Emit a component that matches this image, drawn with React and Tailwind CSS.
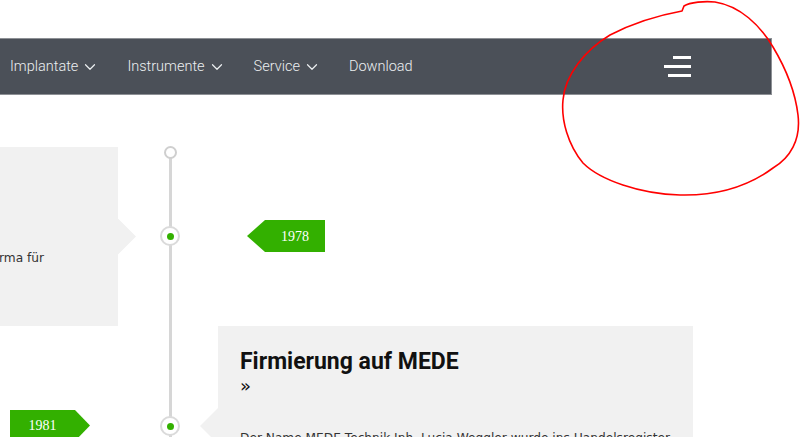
import { ChevronDown } from 'lucide-react';

const navItems = [
	{ label: 'Implantate', menu: true },
	{ label: 'Instrumente', menu: true },
	{ label: 'Service', menu: true },
	{ label: 'Download', menu: false },
];

function Dot({ small }) {
	if (small) {
		return <div className="h-[13px] w-[13px] rounded-full border-2 border-[#cfcfcf] bg-white" />;
	}
	return (
		<div className="flex h-[20px] w-[20px] items-center justify-center rounded-full border-2 border-[#dadada] bg-white">
			<div className="h-[7px] w-[7px] rounded-full bg-[#33b000]" />
		</div>
	);
}

export default function App() {
	return (
		<div className="relative h-[437px] w-[800px] overflow-hidden bg-white font-['DejaVu_Sans',sans-serif] text-[#333]">
			<div className="pt-[38px]">
				{/* ── Nav bar ─────────────────────────────── */}
				<nav className="flex h-[57px] w-[772px] items-center border-y border-r border-[#8d9095] bg-[#4b5058] pl-[10px] pr-[80px] font-['Roboto',sans-serif] text-[14.5px] font-light text-[#eceff1]">
					<ul className="flex items-center gap-[28px]">
						{navItems.map((item) => (
							<li className="flex items-center gap-[3px]" key={item.label}>
								<span>{item.label}</span>
								{item.menu && <ChevronDown size={18} strokeWidth={1.6} />}
							</li>
						))}
					</ul>
					<button className="ml-auto flex w-[27px] flex-col items-end gap-[6px]" type="button">
						<span className="h-[3px] w-[18px] bg-white" />
						<span className="h-[3px] w-[27px] bg-white" />
						<span className="h-[3px] w-[23px] bg-white" />
					</button>
				</nav>

				{/* ── Timeline ────────────────────────────── */}
				<section className="relative mt-[51px]">
					<div className="absolute left-[168.5px] top-[6px] h-[400px] w-[3px] bg-[#d6d6d6]" />
					<div className="absolute left-[163.5px] top-0">
						<Dot small />
					</div>

					{/* Row 1 */}
					<div className="flex h-[180px] items-center">
						<div className="flex w-[160px] items-center">
							<div className="relative h-[179px] w-[118px] bg-[#f1f1f1] pt-[102px] text-[12.2px] leading-[18px]">
								<p className="-ml-[1px]">rma für</p>
								<div className="absolute -right-[18px] top-[72px] h-[36px] w-[18px] bg-[#f1f1f1] [clip-path:polygon(0_0,100%_50%,0_100%)]" />
							</div>
						</div>
						<div className="relative flex w-[20px] justify-center">
							<Dot />
						</div>
						<div className="pl-[67px]">
							<div className="flex h-[32px] w-[78px] items-center justify-center bg-[#33b000] pl-[18px] font-['Liberation_Serif',serif] text-[14px] text-white [clip-path:polygon(18px_0,100%_0,100%_100%,18px_100%,0_50%)]">
								1978
							</div>
						</div>
					</div>

					{/* Row 2 */}
					<div className="flex items-start">
						<div className="w-[160px] pl-[10px] pt-[84px]">
							<div className="flex h-[31px] w-[80px] items-center justify-center bg-[#33b000] pr-[15px] font-['Liberation_Serif',serif] text-[14px] text-white [clip-path:polygon(0_0,65px_0,100%_50%,65px_100%,0_100%)]">
								1981
							</div>
						</div>
						<div className="relative flex w-[20px] justify-center pt-[90px]">
							<Dot />
						</div>
						<div className="pl-[38px]">
							<div className="relative h-[200px] w-[475px] bg-[#f1f1f1] px-[22px] pt-[22px]">
								<div className="absolute -left-[18px] top-[82px] h-[36px] w-[18px] bg-[#f1f1f1] [clip-path:polygon(100%_0,0_50%,100%_100%)]" />
								<h2 className="font-['Roboto',sans-serif] text-[23px] font-bold leading-[28px] text-[#111]">
									Firmierung auf MEDE
								</h2>
								<div className="text-[18px] leading-[20px] text-[#111]">»</div>
								<p className="mt-[32px] whitespace-nowrap text-[12.2px] leading-[20px]">
									Der Name MEDE Technik Inh. Lucia Weggler wurde ins Handelsregister
								</p>
							</div>
						</div>
					</div>
				</section>
			</div>

			{/* Hand-drawn annotation over the menu button */}
			<svg className="pointer-events-none absolute inset-0" height="437" viewBox="0 0 800 437" width="800">
				<path
					d="M682,11 L684,6 C690,2 705,1 715,2 C740,6 760,25 773,47 C785,67 795,90 798,115 C801,140 790,158 773,168 C750,185 720,196 680,195 C640,194 600,180 583,163 C568,145 561,120 563,100 C565,75 585,50 610,35 C635,22 660,15 682,11"
					fill="none"
					stroke="#ff0000"
					strokeLinecap="round"
					strokeWidth="1.6"
				/>
			</svg>
		</div>
	);
}
